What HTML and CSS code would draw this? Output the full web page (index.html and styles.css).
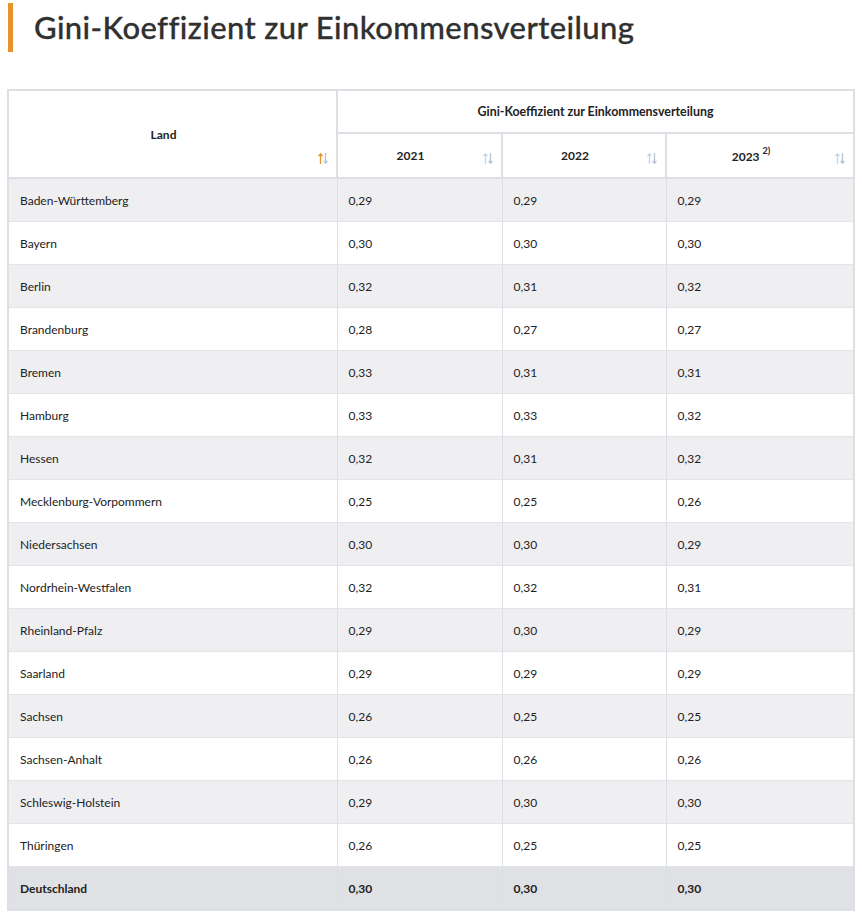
FILE: index.html
```html
<!DOCTYPE html>
<html lang="de">
<head>
<meta charset="utf-8">
<title>Gini-Koeffizient zur Einkommensverteilung</title>
<link rel="stylesheet" href="styles.css">
</head>
<body>
<div class="page">
  <h1 class="title">Gini-Koeffizient zur Einkommensverteilung</h1>
  <table class="data">
    <colgroup>
      <col class="c-land"><col class="c-y1"><col class="c-y2"><col class="c-y3">
    </colgroup>
    <thead>
      <tr class="h1">
        <th rowspan="2" class="th-land">Land
          <span class="sort"><svg width="12" height="13" viewBox="0 0 12 13"><path d="M3.5 12V2M1.5 4.2L3.5 1.8 5.5 4.2" stroke="#e8922a" stroke-width="1.3" fill="none"/><path d="M8.5 1v10M6.5 8.8L8.5 11.2 10.5 8.8" stroke="#b8c4d4" stroke-width="1.3" fill="none"/></svg></span>
        </th>
        <th colspan="3" class="th-group">Gini-Koeffizient zur Einkommensverteilung</th>
      </tr>
      <tr class="h2">
        <th class="th-year">2021<span class="sort"><svg width="12" height="13" viewBox="0 0 12 13"><path d="M3.5 12V2M1.5 4.2L3.5 1.8 5.5 4.2" stroke="#c4d6ea" stroke-width="1.3" fill="none"/><path d="M8.5 1v10M6.5 8.8L8.5 11.2 10.5 8.8" stroke="#b8c4d4" stroke-width="1.3" fill="none"/></svg></span></th>
        <th class="th-year">2022<span class="sort"><svg width="12" height="13" viewBox="0 0 12 13"><path d="M3.5 12V2M1.5 4.2L3.5 1.8 5.5 4.2" stroke="#c4d6ea" stroke-width="1.3" fill="none"/><path d="M8.5 1v10M6.5 8.8L8.5 11.2 10.5 8.8" stroke="#b8c4d4" stroke-width="1.3" fill="none"/></svg></span></th>
        <th class="th-year">2023<sup>2)</sup><span class="sort"><svg width="12" height="13" viewBox="0 0 12 13"><path d="M3.5 12V2M1.5 4.2L3.5 1.8 5.5 4.2" stroke="#c4d6ea" stroke-width="1.3" fill="none"/><path d="M8.5 1v10M6.5 8.8L8.5 11.2 10.5 8.8" stroke="#b8c4d4" stroke-width="1.3" fill="none"/></svg></span></th>
      </tr>
    </thead>
    <tbody>
      <tr><td>Baden-Württemberg</td><td>0,29</td><td>0,29</td><td>0,29</td></tr>
      <tr><td>Bayern</td><td>0,30</td><td>0,30</td><td>0,30</td></tr>
      <tr><td>Berlin</td><td>0,32</td><td>0,31</td><td>0,32</td></tr>
      <tr><td>Brandenburg</td><td>0,28</td><td>0,27</td><td>0,27</td></tr>
      <tr><td>Bremen</td><td>0,33</td><td>0,31</td><td>0,31</td></tr>
      <tr><td>Hamburg</td><td>0,33</td><td>0,33</td><td>0,32</td></tr>
      <tr><td>Hessen</td><td>0,32</td><td>0,31</td><td>0,32</td></tr>
      <tr><td>Mecklenburg-Vorpommern</td><td>0,25</td><td>0,25</td><td>0,26</td></tr>
      <tr><td>Niedersachsen</td><td>0,30</td><td>0,30</td><td>0,29</td></tr>
      <tr><td>Nordrhein-Westfalen</td><td>0,32</td><td>0,32</td><td>0,31</td></tr>
      <tr><td>Rheinland-Pfalz</td><td>0,29</td><td>0,30</td><td>0,29</td></tr>
      <tr><td>Saarland</td><td>0,29</td><td>0,29</td><td>0,29</td></tr>
      <tr><td>Sachsen</td><td>0,26</td><td>0,25</td><td>0,25</td></tr>
      <tr><td>Sachsen-Anhalt</td><td>0,26</td><td>0,26</td><td>0,26</td></tr>
      <tr><td>Schleswig-Holstein</td><td>0,29</td><td>0,30</td><td>0,30</td></tr>
      <tr><td>Thüringen</td><td>0,26</td><td>0,25</td><td>0,25</td></tr>
      <tr class="total"><td>Deutschland</td><td>0,30</td><td>0,30</td><td>0,30</td></tr>
    </tbody>
  </table>
</div>
</body>
</html>
```
FILE: styles.css
```css
html, body {
  margin: 0;
  padding: 0;
  background: #fff;
}
body {
  font-family: Lato, "Liberation Sans", sans-serif;
  color: #222;
}
.page {
  padding: 3px 7px 0 7px;
}
.title {
  margin: 0 0 37px 1px;
  border-left: 5px solid #e8922a;
  padding: 5px 0 5px 21px;
  height: 39px;
  line-height: 39px;
  font-family: Lato, "Open Sans", sans-serif;
  font-weight: 500;
  font-size: 31px;
  color: #303030;
  letter-spacing: 0.4px;
  -webkit-text-stroke: 0.3px #303030;
}
.data {
  width: 848px;
  border-collapse: collapse;
  table-layout: fixed;
  border: 2px solid #dcdfe4;
  font-size: 12px;
}
.c-land { width: 329px; }
.c-y1 { width: 165px; }
.c-y2 { width: 164px; }
.c-y3 { width: 188px; }
th {
  position: relative;
  font-weight: 700;
  font-size: 12px;
  color: #222;
  border: 2px solid #dcdfe4;
  text-align: center;
  padding: 0 30px 0 12px;
}
.h1 th { height: 41px; }
.h2 th { height: 43px; }
.th-group { font-size: 12.4px; padding: 0 12px; }
.th-year sup {
  font-size: 9px;
  margin-left: 3px;
  position: relative;
  top: -2px;
}
.sort {
  position: absolute;
  right: 7px;
  bottom: 12px;
  width: 12px;
  height: 13px;
  display: block;
}
.sort svg { display: block; }
td {
  height: 42px;
  padding: 0 11px;
  border-left: 1px solid #dcdfe4;
  border-right: 1px solid #dcdfe4;
  border-top: 1px solid #e2e4e8;
  font-size: 12px;
  color: #222;
  white-space: nowrap;
}
tbody tr:nth-child(odd) td { background: #efeff2; }
tbody tr:nth-child(even) td { background: #fff; }
tbody tr.total td {
  background: #e0e1e4;
  font-weight: 700;
}
```
